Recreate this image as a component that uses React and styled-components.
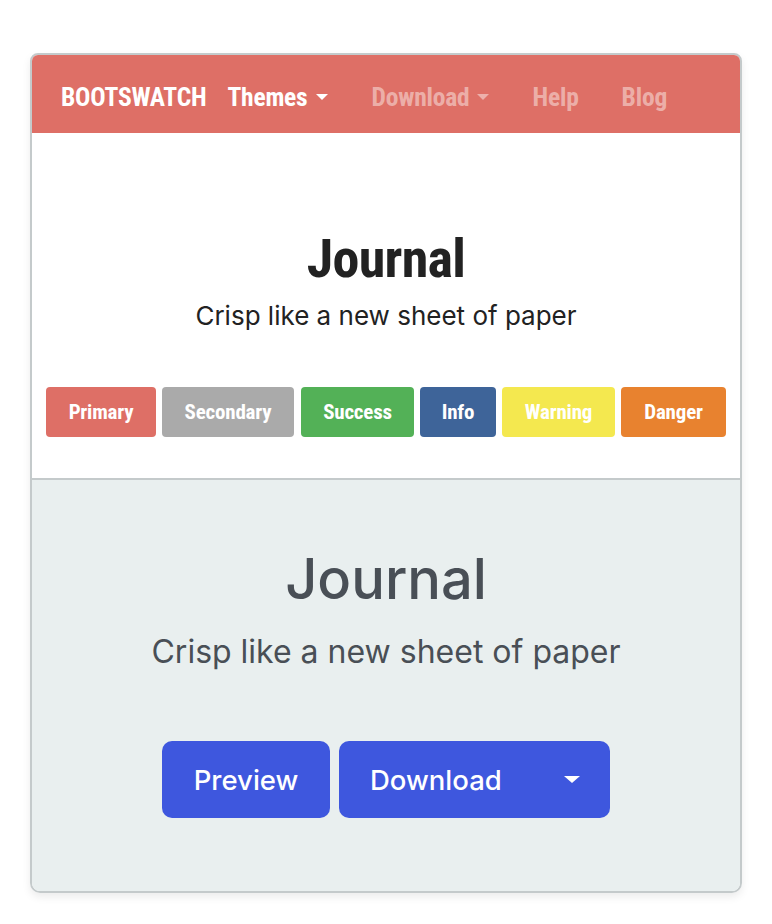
import React from "react";
import styled, { createGlobalStyle } from "styled-components";

const Global = createGlobalStyle`
  html, body { margin: 0; padding: 0; background: #ffffff; }
  body { font-family: Inter, "Noto Sans", sans-serif; }
  * { box-sizing: border-box; }
`;

const Page = styled.div`
  width: 772px;
  height: 924px;
  padding: 53px 30px 0 30px;
`;

const Card = styled.div`
  width: 712px;
  height: 840px;
  border: 2px solid #c4cacb;
  border-radius: 8px 8px 10px 10px;
  overflow: hidden;
  display: flex;
  flex-direction: column;
  box-shadow: 0 4px 8px rgba(0, 0, 0, 0.08);
`;

const condensed = `"Liberation Sans Narrow", "Roboto Condensed", "Arial Narrow", sans-serif`;

const Navbar = styled.nav`
  height: 78px;
  background: #de6f66;
  display: flex;
  align-items: center;
  padding: 5px 0 0 29px;
  font-family: ${condensed};
  font-weight: 700;
  font-size: 25.5px;
  letter-spacing: -0.2px;
`;

const Brand = styled.span`
  color: #ffffff;
  margin-right: 21px;
`;

const NavItem = styled.span`
  color: ${(p) => (p.$muted ? "rgba(255,255,255,0.45)" : "#ffffff")};
  display: flex;
  align-items: center;
  margin-right: ${(p) => p.$mr}px;
`;

const Caret = styled.span`
  display: inline-block;
  width: 0;
  height: 0;
  margin-left: ${(p) => p.$ml || 6}px;
  border-left: ${(p) => p.$s || 6}px solid transparent;
  border-right: ${(p) => p.$s || 6}px solid transparent;
  border-top: ${(p) => p.$h || 6}px solid currentColor;
`;

const Top = styled.section`
  height: 347px;
  background: #ffffff;
  border-bottom: 2px solid #c4cacb;
  display: flex;
  flex-direction: column;
  align-items: center;
  padding-top: 96px;
`;

const TopTitle = styled.h1`
  margin: 0;
  font-family: ${condensed};
  font-weight: 700;
  font-size: 54px;
  line-height: 60px;
  color: #222222;
  letter-spacing: -0.7px;
`;

const TopSub = styled.p`
  margin: 12px 0 0 0;
  font-family: Inter, sans-serif;
  font-size: 26px;
  line-height: 30px;
  color: #222222;
`;

const Badges = styled.div`
  margin-top: 56px;
  display: flex;
  gap: 6px;
  width: 680px;
`;

const Badge = styled.span`
  height: 50px;
  width: ${(p) => p.$w}px;
  margin-left: ${(p) => p.$ml || 0}px;
  background: ${(p) => p.$bg};
  color: #ffffff;
  border-radius: 4px;
  display: flex;
  align-items: center;
  justify-content: center;
  font-family: ${condensed};
  font-weight: 700;
  font-size: 21px;
  letter-spacing: -0.2px;
`;

const Bottom = styled.section`
  flex: 1;
  background: #e9efef;
  display: flex;
  flex-direction: column;
  align-items: center;
  padding-top: 66px;
`;

const BottomTitle = styled.h2`
  margin: 0;
  font-family: Inter, sans-serif;
  font-weight: 500;
  font-size: 56px;
  line-height: 66px;
  color: #494f56;
`;

const BottomSub = styled.p`
  margin: 21px 0 0 0;
  font-family: Inter, sans-serif;
  font-size: 32px;
  line-height: 38px;
  color: #494f56;
`;

const Actions = styled.div`
  margin-top: 70px;
  display: flex;
  gap: 9px;
`;

const Button = styled.button`
  height: 77px;
  border: none;
  border-radius: 10px;
  background: #3e57de;
  color: #ffffff;
  font-family: Inter, sans-serif;
  font-weight: 500;
  font-size: 27.5px;
  display: flex;
  align-items: center;
  padding: 0 ${(p) => p.$pr}px 0 ${(p) => p.$pl}px;
  width: ${(p) => p.$w}px;
  justify-content: ${(p) => (p.$split ? "space-between" : "center")};
`;

const badges = [
  ["Primary", "#de6f66", 110, 0],
  ["Secondary", "#aaaaaa", 132, 0],
  ["Success", "#53b157", 113, 1],
  ["Info", "#3e6499", 76, 0],
  ["Warning", "#f4e84f", 113, 0],
  ["Danger", "#e8822f", 105, 0],
];

export default function App() {
  return (
    <>
      <Global />
      <Page>
        <Card>
          <Navbar>
            <Brand>BOOTSWATCH</Brand>
            <NavItem $mr={44}>
              Themes
              <Caret $ml={8} />
            </NavItem>
            <NavItem $muted $mr={43}>
              Download
              <Caret $ml={8} />
            </NavItem>
            <NavItem $muted $mr={43}>
              Help
            </NavItem>
            <NavItem $muted $mr={0}>
              Blog
            </NavItem>
          </Navbar>
          <Top>
            <TopTitle>Journal</TopTitle>
            <TopSub>Crisp like a new sheet of paper</TopSub>
            <Badges>
              {badges.map(([label, bg, w, ml]) => (
                <Badge key={label} $bg={bg} $w={w} $ml={ml}>
                  {label}
                </Badge>
              ))}
            </Badges>
          </Top>
          <Bottom>
            <BottomTitle>Journal</BottomTitle>
            <BottomSub>Crisp like a new sheet of paper</BottomSub>
            <Actions>
              <Button $w={168} $pl={0} $pr={0}>
                Preview
              </Button>
              <Button $w={271} $pl={31} $pr={30} $split>
                Download
                <Caret $ml={0} $s={8} $h={7} />
              </Button>
            </Actions>
          </Bottom>
        </Card>
      </Page>
    </>
  );
}
